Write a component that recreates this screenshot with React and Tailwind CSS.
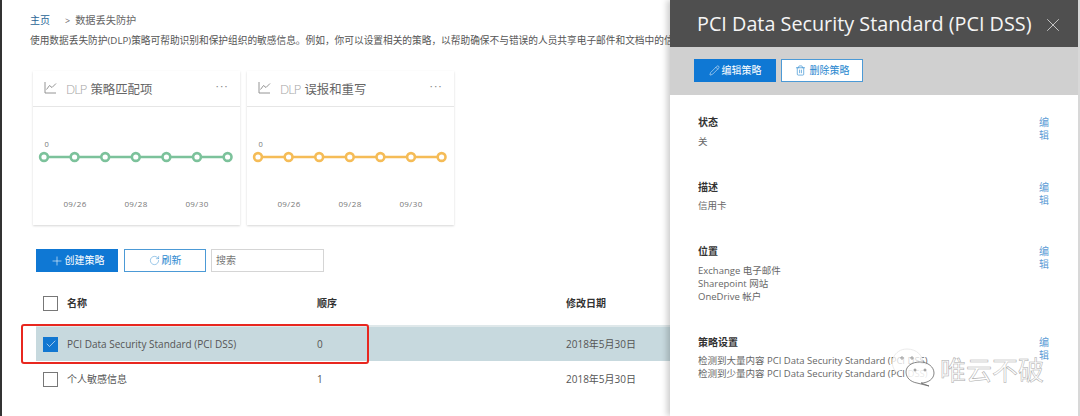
import React from "react";
import { Pencil, Plus, RotateCw, Trash2, X, Check } from "lucide-react";

const FONT = { fontFamily: '"Open Sans","Noto Sans CJK SC",sans-serif' };

function Chart({ color, title }) {
  const xs = [0, 1, 2, 3, 4, 5, 6].map((i) => 11 + i * 30.6);
  return (
    <div className="w-[207px] h-[154px] bg-white shadow-[0_1px_2px_rgba(0,0,0,0.16)] flex flex-col">
      <div className="h-[36px] border-b border-[#e6e6e6] flex items-center pl-[11px] pr-[11px]">
        <svg width="13" height="13" viewBox="0 0 13 13" fill="none" stroke="#888" strokeWidth="0.9" className="mb-[3px]">
          <path d="M1 1v11h11" />
          <path d="M2.5 8.5l3-4 2.5 2 4-4" />
        </svg>
        <span className="ml-[9px] mt-[3px] text-[13px] tracking-[-1px] text-[#a6a6a6] font-light">DLP</span>
        <span className="ml-[4px] mt-[3px] text-[12.4px] text-[#666]">{title}</span>
        <span className="ml-auto text-[#888] text-[11px] tracking-[1.5px] mb-[6px] leading-none">···</span>
      </div>
      <svg width="207" height="118" viewBox="0 0 207 118">
        <text x="11.5" y="40" fontSize="7.5" fill="#777" style={FONT}>0</text>
        <line x1={xs[0]} x2={xs[6]} y1="50" y2="50" stroke={color} strokeWidth="2.4" />
        {xs.map((x) => (
          <circle key={x} cx={x} cy="50" r="3.9" fill="#fff" stroke={color} strokeWidth="2.6" />
        ))}
        {[["09/26", 42], ["09/28", 103], ["09/30", 164]].map(([t, x]) => (
          <text key={t} x={x} y="100" fontSize="8" letterSpacing="0.4" textAnchor="middle" fill="#777" style={FONT}>{t}</text>
        ))}
      </svg>
    </div>
  );
}

function Box({ checked }) {
  return checked ? (
    <span className="w-[15px] h-[15px] bg-[#1177d1] flex items-center justify-center">
      <Check size={12} strokeWidth={1.2} color="#fff" />
    </span>
  ) : (
    <span className="w-[15px] h-[15px] border border-[#777] bg-white" />
  );
}

function Row({ selected, name, order, bold, date, cls }) {
  const text = bold ? "font-semibold text-[#333]" : "text-[#555]";
  return (
    <div className={`flex items-center pl-[7px] ${cls} ${selected ? "bg-[#c7d9de]" : ""}`}>
      <Box checked={selected} />
      <span className={`ml-[9px] w-[250px] ${text}`}>{name}</span>
      <span className={`w-[249px] ${text}`}>{order}</span>
      <span className={text}>{date}</span>
    </div>
  );
}

function Section({ title, lines }) {
  return (
    <div className="flex justify-between mb-[33px] last:mb-0">
      <div className="min-w-0 flex-1 overflow-hidden">
        <div className="text-[10px] leading-[13px] font-semibold text-[#333]">{title}</div>
        <div className="mt-[5.5px] text-[9.5px] leading-[13px] text-[#666] whitespace-nowrap">
          {lines.map((l) => <div key={l}>{l}</div>)}
        </div>
      </div>
      <div className="w-[10px] ml-[6px] text-[10px] leading-[13px] text-[#5b9bd5] break-all">编辑</div>
    </div>
  );
}

export default function App() {
  return (
    <div className="relative w-[1080px] h-[416px] overflow-hidden bg-white flex" style={FONT}>
      <div className="w-[2px] bg-[#333]" />
      <main className="flex-1 min-w-0 overflow-hidden pt-[14px] pl-[28px]">
        <div className="flex items-center h-[13px] text-[10px] leading-[13px] text-[#666]">
          <span className="text-[#2a6496]">主页</span>
          <span className="ml-[15px] text-[9px]">&gt;</span>
          <span className="ml-[5px] text-[10.2px]">数据丢失防护</span>
        </div>
        <div className="mt-[7px] text-[9.7px] leading-[13px] text-[#555] whitespace-nowrap">
          使用数据丢失防护(DLP)策略可帮助识别和保护组织的敏感信息。例如，你可以设置相关的策略，以帮助确保不与错误的人员共享电子邮件和文档中的信息。
        </div>
        <div className="flex gap-[7px] mt-[24px] ml-[3px]">
          <Chart color="#7cc29b" title="策略匹配项" />
          <Chart color="#f5bc57" title="误报和重写" />
        </div>
        <div className="flex mt-[24px] ml-[6px] text-[10px]">
          <button className="w-[82px] h-[23px] bg-[#0f78d4] text-white flex items-center justify-center gap-[1px]">
            <Plus size={14} strokeWidth={1} />创建策略
          </button>
          <button className="ml-[6px] w-[82px] h-[23px] border border-[#4c9ad6] text-[#2a88cf] flex items-center justify-center gap-[2px]">
            <RotateCw size={11} strokeWidth={1} />刷新
          </button>
          <div className="ml-[5px] w-[113px] h-[23px] border border-[#d5d5d5] text-[#777] flex items-center pl-[4px]">搜索</div>
        </div>
        <div className="mt-[16px] ml-[6px] mr-0 text-[10px] leading-[13px]">
          <Row bold name="名称" order="顺序" date="修改日期" cls="h-[39px] pb-[7px] border-b-2 border-[#dfe8ea]" />
          <Row selected name="PCI Data Security Standard (PCI DSS)" order="0" date="2018年5月30日" cls="h-[34px]" />
          <Row name="个人敏感信息" order="1" date="2018年5月30日" cls="h-[36px]" />
        </div>
      </main>

      <div className="absolute left-[21px] top-[324px] w-[348px] h-[40px] border-2 border-[#e8271f] rounded-[3px]" />

      <aside className="absolute right-0 top-0 bottom-0 w-[410px] bg-white shadow-[-3px_0_6px_rgba(0,0,0,0.2)] flex flex-col border-r-2 border-[#d8d8d8]">
        <div className="h-[47px] bg-[#4f4f4f] flex items-center pl-[27px] pr-[14px] text-[#f5f5f5]">
          <span className="text-[19.8px] leading-none whitespace-nowrap">PCI Data Security Standard (PCI DSS)</span>
          <X size={22} strokeWidth={0.9} className="ml-auto mt-[2px] text-[#ddd]" />
        </div>
        <div className="h-[48px] bg-[#d0d0d0] flex items-center gap-[5px] pl-[24px] pb-[2px] text-[10px]">
          <button className="w-[82px] h-[23px] bg-[#0f78d4] text-white flex items-center justify-center gap-[2px]">
            <Pencil size={11} strokeWidth={1.1} />编辑策略
          </button>
          <button className="w-[82px] h-[23px] bg-white border border-[#4c9ad6] text-[#2a88cf] flex items-center justify-center gap-[4px]">
            <Trash2 size={11} strokeWidth={1.4} className="text-[#2a88cf]" />删除策略
          </button>
        </div>
        <div className="pt-[21px] pl-[28px] pr-[29px]">
          <Section title="状态" lines={["关"]} />
          <Section title="描述" lines={["信用卡"]} />
          <Section title="位置" lines={["Exchange 电子邮件", "Sharepoint 网站", "OneDrive 帐户"]} />
          <Section title="策略设置" lines={["检测到大量内容 PCI Data Security Standard (PCI DSS)", "检测到少量内容 PCI Data Security Standard (PCI DSS)"]} />
        </div>
      </aside>

      <div className="absolute left-[890px] top-[348px] flex items-center">
        <svg width="48" height="42" viewBox="0 0 48 42" fill="none" className="block">
          <path d="M6 24 C-2 15 4 1 17 1 C27 1 33 8 33 15" fill="rgba(255,255,255,0.75)" stroke="#e4e4e4" strokeWidth="0.8" />
          <circle cx="12" cy="10" r="1.2" stroke="#777" strokeWidth="0.7" />
          <circle cx="22" cy="10" r="1.2" stroke="#777" strokeWidth="0.7" />
          <path d="M30 14 C38 14 44 19 44 25 C44 31 38 35 31 35 L39 38 L27 35 C21 34 16 30 16 24 C16 18 22 14 30 14Z" fill="rgba(255,255,255,0.85)" stroke="#666" strokeWidth="0.8" />
          <circle cx="25" cy="22" r="1" stroke="#666" strokeWidth="0.7" />
          <circle cx="35" cy="22" r="1" stroke="#666" strokeWidth="0.7" />
        </svg>
        <span className="ml-[2px] mt-[2px] text-[26px] leading-none text-white [-webkit-text-stroke:0.5px_#aaa] whitespace-nowrap">唯云不破</span>
      </div>
    </div>
  );
}
